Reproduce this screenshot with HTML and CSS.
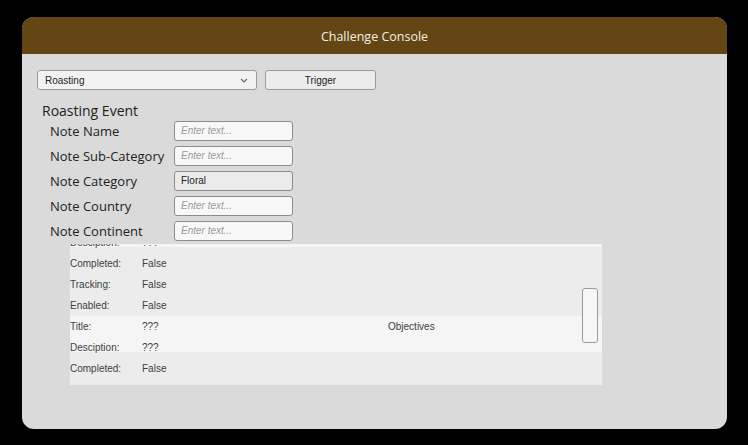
FILE: index.html
```html
<!DOCTYPE html>
<html lang="en">
<head>
    <meta charset="UTF-8">
    <title>Challenge Console</title>
    <link rel="stylesheet" href="styles.css">
</head>
<body>
    <div class="console">
        <div class="console-header">Challenge Console</div>

        <div class="console-body">
            <div class="toolbar">
                <div class="select">
                    <span>Roasting</span>
                    <svg class="chevron" width="8" height="5" viewBox="0 0 8 5"><path d="M1 1 L4 4 L7 1" fill="none" stroke="#666" stroke-width="1.1"/></svg>
                </div>
                <button class="btn">Trigger</button>
            </div>

            <div class="event-title">Roasting Event</div>
            <div class="form">
                <div class="form-row"><label>Note Name</label><div class="field placeholder">Enter text...</div></div>
                <div class="form-row"><label>Note Sub-Category</label><div class="field placeholder">Enter text...</div></div>
                <div class="form-row"><label>Note Category</label><div class="field filled">Floral</div></div>
                <div class="form-row"><label>Note Country</label><div class="field placeholder">Enter text...</div></div>
                <div class="form-row"><label>Note Continent</label><div class="field placeholder">Enter text...</div></div>
            </div>

            <div class="list">
                <div class="list-inner">
                    <div class="objective">
                        <div class="row"><span class="key">Title:</span><span class="val">???</span></div>
                        <div class="row"><span class="key">Desciption:</span><span class="val">???</span></div>
                        <div class="row"><span class="key">Completed:</span><span class="val">False</span></div>
                        <div class="row"><span class="key">Tracking:</span><span class="val">False</span></div>
                        <div class="row"><span class="key">Enabled:</span><span class="val">False</span></div>
                    </div>
                    <div class="objective">
                        <div class="row"><span class="key">Title:</span><span class="val">???</span><span class="tag">Objectives</span></div>
                        <div class="row"><span class="key">Desciption:</span><span class="val">???</span></div>
                        <div class="row"><span class="key">Completed:</span><span class="val">False</span></div>
                    </div>
                </div>
                <div class="thumb"></div>
            </div>
        </div>
    </div>
</body>
</html>
```

FILE: styles.css
```css
* {
    margin: 0;
    padding: 0;
    box-sizing: border-box;
}

body {
    background-color: #000;
    font-family: 'Open Sans', sans-serif;
    width: 748px;
    height: 445px;
    overflow: hidden;
}

.console {
    margin: 17px 0 0 22px;
    width: 705px;
    height: 412px;
    background-color: #dadada;
    border-radius: 12px;
    overflow: hidden;
}

.console-header {
    height: 37px;
    background-color: #634614;
    color: #f2efe8;
    font-size: 12.5px;
    line-height: 40px;
    text-align: center;
}

.console-body {
    padding: 16px 0 0 15px;
}

.toolbar {
    display: flex;
    gap: 8px;
}

.select {
    width: 220px;
    height: 20px;
    background-color: #f2f2f2;
    border: 1px solid #9a9a9a;
    border-radius: 3px;
    display: flex;
    align-items: center;
    justify-content: space-between;
    padding: 0 8px 0 7px;
    font-family: 'Liberation Sans', sans-serif;
    font-size: 10px;
    color: #222;
}

.btn {
    width: 111px;
    height: 20px;
    background-color: #ececec;
    border: 1px solid #9a9a9a;
    border-radius: 3px;
    font-family: 'Liberation Sans', sans-serif;
    font-size: 10px;
    color: #222;
}

.event-title {
    margin: 14px 0 0 5px;
    font-size: 14px;
    line-height: 14px;
    color: #222;
}

.form {
    padding-left: 13px;
}

.form-row {
    display: flex;
    align-items: center;
    height: 25px;
}

.form-row label {
    width: 124px;
    font-size: 13px;
    color: #222;
}

.field {
    width: 119px;
    height: 20px;
    border: 1px solid #8c8c8c;
    border-radius: 3px;
    background-color: #f8f8f8;
    font-family: 'Liberation Sans', sans-serif;
    font-size: 10px;
    line-height: 18px;
    padding-left: 6px;
}

.field.placeholder {
    color: #9a9a9a;
    font-style: italic;
}

.field.filled {
    background-color: #ebebeb;
    color: #222;
}

.list {
    position: relative;
    margin: 1px 0 0 33px;
    width: 532px;
    height: 141px;
    background-color: #ececec;
    overflow: hidden;
}

.list-inner {
    margin-top: -33px;
}

.objective {
    background: linear-gradient(#f5f5f5 0, #f5f5f5 36px, transparent 36px);
}

.row {
    display: flex;
    height: 21px;
    line-height: 21px;
    font-family: 'Liberation Sans', sans-serif;
    font-size: 10px;
    color: #404040;
}

.key {
    width: 72px;
}

.val {
    width: 246px;
}

.thumb {
    position: absolute;
    top: 44px;
    right: 4px;
    width: 16px;
    height: 55px;
    background-color: #f6f6f6;
    border: 1px solid #9a9a9a;
    border-radius: 3px;
}
```
